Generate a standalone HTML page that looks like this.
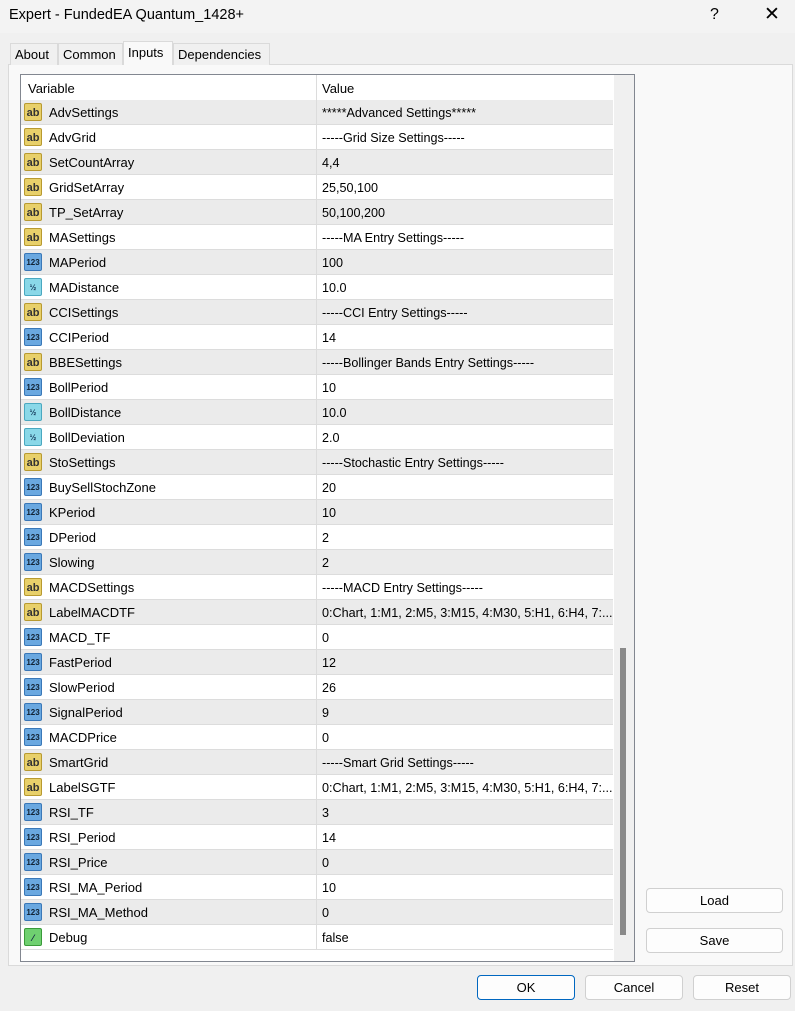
<!DOCTYPE html>
<html><head><style>
*{box-sizing:border-box;margin:0;padding:0}
body{width:795px;height:1011px;background:#f0f0f0;font-family:"Liberation Sans",sans-serif;font-size:13px;color:#000;position:relative;overflow:hidden}
.title{position:absolute;left:0;top:0;width:795px;height:33px;background:#f3f3f3}
.title span{position:absolute;left:9px;top:7px;font-size:14.5px}
.tab{position:absolute;top:43px;height:22px;background:#f0f0f0;border:1px solid #dadada;border-bottom:none;font-size:13px;padding:3px 4px}
.panel{position:absolute;left:8px;top:64px;width:785px;height:902px;background:#f9f9f9;border:1px solid #dadada}
.list{position:absolute;left:20px;top:74px;width:615px;height:888px;background:#fff;border:1px solid #828790}
.hdr{position:absolute;left:0;top:0;width:592px;height:26px;background:#fff}
.hdr span{position:absolute;top:6px}
.row{position:absolute;left:0;width:592px;height:25px;border-bottom:1px solid #dcdcdc}
.row .n{position:absolute;left:28px;top:5px}
.row .v{position:absolute;left:301px;top:6px;white-space:nowrap;width:290px;overflow:hidden;font-size:12.6px}
.vl{position:absolute;left:295px;top:0;width:1px;height:875px;background:#dcdcdc}
.ic{position:absolute;left:3px;top:3px;width:18px;height:18px;border-radius:2px;font-size:9px;font-weight:bold;text-align:center;line-height:18px}
.ab{background:#e8d06a;border:1px solid #b89a30;color:#333;font-size:11px}
.nm{background:#6aa8e0;border:1px solid #3a78b8;color:#123;font-size:8px}
.hf{background:#8ad8e8;border:1px solid #4aa8c0;color:#135;font-size:8px}
.bo{background:#6fd070;border:1px solid #3a9a3a;color:#124}
.sb{position:absolute;left:593px;top:0;width:20px;height:886px;background:#f0f0f0}
.th{position:absolute;left:6px;top:573px;width:6px;height:287px;background:#8a8a8a}
.btn{position:absolute;height:25px;background:#fdfdfd;border:1px solid #d0d0d0;border-radius:4px;text-align:center;line-height:23px;font-size:13px}
</style></head><body>
<div class="title"><span>Expert - FundedEA Quantum_1428+</span>
<span style="left:710px;top:6px;font-size:16px">?</span>
<span style="left:764px;top:3px;font-size:19px;font-weight:300">✕</span></div>
<div class="panel"></div>
<div class="tab" style="left:10px;width:48px">About</div>
<div class="tab" style="left:58px;width:65px">Common</div>
<div class="tab" style="left:123px;top:41px;height:24px;width:50px;background:#f9f9f9;z-index:2">Inputs</div>
<div class="tab" style="left:173px;width:97px">Dependencies</div>
<div class="list">
<div class="hdr"><span style="left:7px">Variable</span><span style="left:301px">Value</span></div>
<div id="rows"></div>
<div class="sb"><div class="th"></div></div>
</div>
<div class="btn" style="left:646px;top:888px;width:137px">Load</div>
<div class="btn" style="left:646px;top:928px;width:137px">Save</div>
<div class="btn" style="left:477px;top:975px;width:98px;border:1px solid #0067c0">OK</div>
<div class="btn" style="left:585px;top:975px;width:98px">Cancel</div>
<div class="btn" style="left:693px;top:975px;width:98px">Reset</div>
<script>
var d=[["ab","AdvSettings","*****Advanced Settings*****"],["ab","AdvGrid","-----Grid Size Settings-----"],["ab","SetCountArray","4,4"],["ab","GridSetArray","25,50,100"],["ab","TP_SetArray","50,100,200"],["ab","MASettings","-----MA Entry Settings-----"],["nm","MAPeriod","100"],["hf","MADistance","10.0"],["ab","CCISettings","-----CCI Entry Settings-----"],["nm","CCIPeriod","14"],["ab","BBESettings","-----Bollinger Bands Entry Settings-----"],["nm","BollPeriod","10"],["hf","BollDistance","10.0"],["hf","BollDeviation","2.0"],["ab","StoSettings","-----Stochastic Entry Settings-----"],["nm","BuySellStochZone","20"],["nm","KPeriod","10"],["nm","DPeriod","2"],["nm","Slowing","2"],["ab","MACDSettings","-----MACD Entry Settings-----"],["ab","LabelMACDTF","0:Chart, 1:M1, 2:M5, 3:M15, 4:M30, 5:H1, 6:H4, 7:..."],["nm","MACD_TF","0"],["nm","FastPeriod","12"],["nm","SlowPeriod","26"],["nm","SignalPeriod","9"],["nm","MACDPrice","0"],["ab","SmartGrid","-----Smart Grid Settings-----"],["ab","LabelSGTF","0:Chart, 1:M1, 2:M5, 3:M15, 4:M30, 5:H1, 6:H4, 7:..."],["nm","RSI_TF","3"],["nm","RSI_Period","14"],["nm","RSI_Price","0"],["nm","RSI_MA_Period","10"],["nm","RSI_MA_Method","0"],["bo","Debug","false"]];
var t={ab:"ab",nm:"123",hf:"½",bo:"⁄"};var h="";
d.forEach(function(r,i){h+='<div class="row" style="top:'+(25+i*25)+'px;background:'+(i%2==0?'#ebebeb':'#fff')+'"><div class="ic '+r[0]+'">'+t[r[0]]+'</div><span class="n">'+r[1]+'</span><span class="v">'+r[2]+'</span></div>';});
h+='<div class="vl"></div>';
document.getElementById("rows").innerHTML=h;
</script>
</body></html>
